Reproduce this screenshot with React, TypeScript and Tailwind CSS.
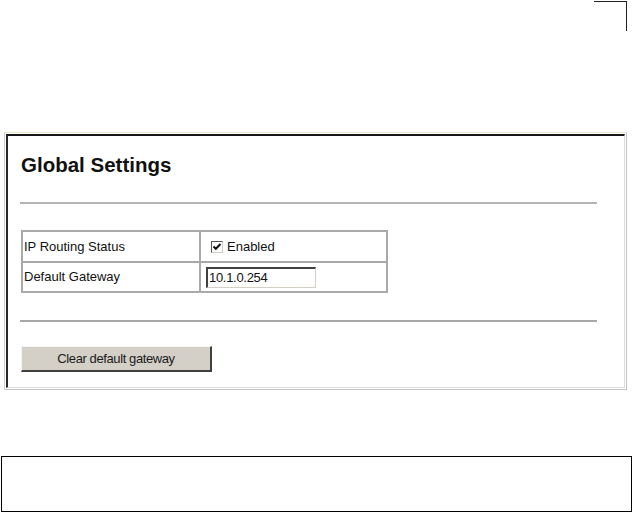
import React from "react";

const Checkbox = () => {
  return (
    <span className="inline-flex w-[12px] h-[12px] bg-white border-t border-l border-[#555] border-r border-b border-r-[#d4d0c8] border-b-[#d4d0c8] items-center justify-center">
      <svg width="10" height="10" viewBox="0 0 10 10">
        <polyline points="1.5,4.5 3.8,6.8 8.5,2" fill="none" stroke="#111" strokeWidth="2" />
      </svg>
    </span>
  );
};

const App = () => {
  return (
    <div className="w-[633px] h-[513px] bg-white overflow-hidden font-['Liberation_Sans',Arial,sans-serif] text-[#111]">
      {/* crop mark */}
      <div className="flex justify-end pt-[1px] pr-[6px]">
        <div className="w-[33px] h-[30px] border-t border-r border-[#222]" />
      </div>

      {/* settings panel */}
      <div className="mt-[101px] ml-[4px] w-[623px] bg-white border border-t-[#dfeac6] border-l-[#cfcfcf] border-r-[#c4c4c4] border-b-[#c4c4c4] p-[1px]">
        <div className="border-t-2 border-l-2 border-t-[#151515] border-l-[#2a2a2a] border-r border-b border-r-[#dcdcdc] border-b-[#dcdcdc] pt-[17px] pb-[15px]">
          <div className="pl-[13px] text-[20.5px] leading-[23px] font-bold text-[#111]">
            Global Settings
          </div>

          <div className="mt-[26px] ml-[12px] w-[577px] h-[2px] bg-[#b4b4b4]" />

          <div className="mt-[26px] ml-[13px] w-[367px] border-2 border-[#a9a9a9] text-[13px] text-[#111]">
            <div className="grid grid-cols-[176px_2px_185px] h-[29px]">
              <div className="flex items-center pl-[1px]">IP Routing Status</div>
              <div className="bg-[#a9a9a9]" />
              <div className="flex items-center pl-[10px] gap-[4px]">
                <Checkbox />
                <span>Enabled</span>
              </div>
            </div>
            <div className="h-[2px] bg-[#a9a9a9]" />
            <div className="grid grid-cols-[176px_2px_185px] h-[28px]">
              <div className="flex items-center pl-[1px]">Default Gateway</div>
              <div className="bg-[#a9a9a9]" />
              <div className="flex items-center pl-[5px]">
                <div className="w-[110px] h-[21px] flex items-center bg-white border-t-2 border-l-2 border-t-[#404040] border-l-[#404040] border-r border-b border-r-[#d4d0c8] border-b-[#d4d0c8] pl-[1px] tracking-[-0.3px]">
                  10.1.0.254
                </div>
              </div>
            </div>
          </div>

          <div className="mt-[27px] ml-[12px] w-[577px] h-[2px] bg-[#a8a8a8]" />

          <div className="mt-[24px] ml-[13px] w-[191px] h-[26px] flex items-center justify-center bg-[#d4d0c8] border-t border-l border-t-[#f4f4f4] border-l-[#f4f4f4] border-r-2 border-b-2 border-r-[#404040] border-b-[#404040] text-[13px] text-[#1a1a1a] tracking-[-0.4px]">
            Clear default gateway
          </div>
        </div>
      </div>

      {/* note box */}
      <div className="mt-[66px] ml-[1px] w-[631px] h-[56px] border border-black" />
    </div>
  );
};

export default App;
